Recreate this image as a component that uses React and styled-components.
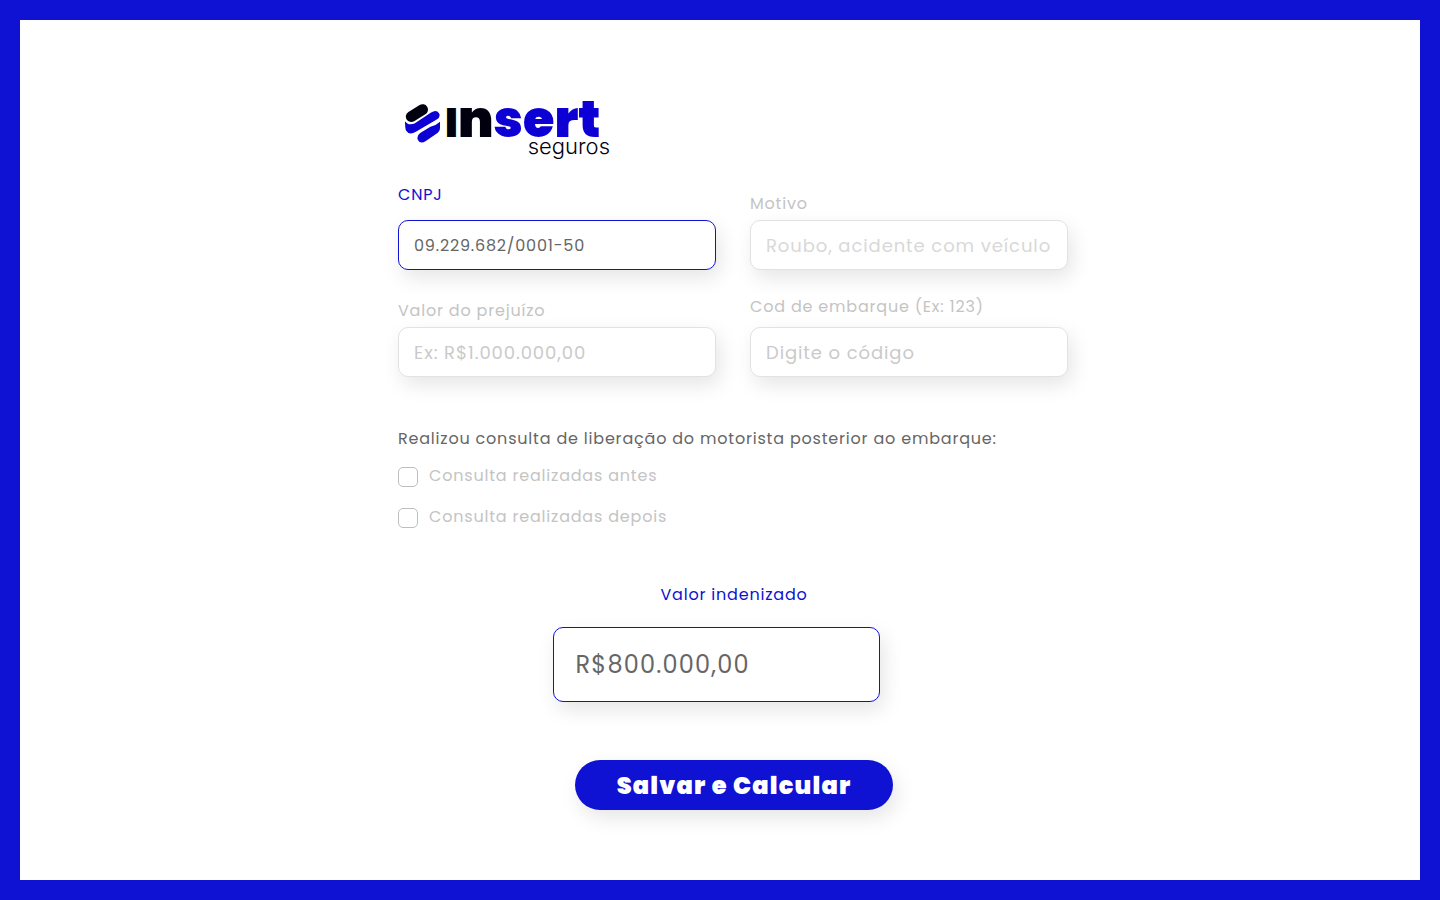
import React, { useState } from "react";
import styled, { createGlobalStyle } from "styled-components";

const blue = "#0f12d2";
const ink = "#666666";
const muted = "#c4c4c4";
const shadow = "4px 8px 20px rgba(0, 0, 0, 0.1)";

const GlobalStyle = createGlobalStyle`
  *, *::before, *::after { box-sizing: border-box; }
  body {
    margin: 0;
    background: #fff;
    color: ${ink};
    font-family: Poppins, Inter, sans-serif;
    font-size: 16px;
    line-height: 24px;
  }
  label, legend, input, button { letter-spacing: 0.05em; }
`;

const Page = styled.main`
  display: flex;
  justify-content: center;
  min-height: 100vh;
  padding: 84px 0 48px 28px;
  border: 20px solid ${blue};
`;

const Form = styled.form`
  width: 100%;
  max-width: 672px;
`;

const Brand = styled.header`
  display: flex;
  align-items: flex-start;
  gap: 5px;
  height: 79px;
  padding-left: 7px;
`;

const Wordmark = styled.div`
  display: flex;
  flex-direction: column;
  width: 165px;
`;

const BrandName = styled.div`
  color: #0d00d4;
  font-size: 51px;
  font-weight: 900;
  line-height: 30px;
  white-space: nowrap;
`;

const BrandDark = styled.span`
  color: #00000f;
`;

const BrandInitial = styled.span`
  font-size: 40px;
  line-height: 0;
`;

const BrandSub = styled.div`
  color: #00000f;
  font-family: Inter, sans-serif;
  font-size: 22px;
  font-weight: 300;
  text-align: right;
`;

const Fields = styled.div`
  display: grid;
  grid-template-columns: repeat(2, minmax(0, 318px));
  align-items: end;
  gap: 25px 34px;
`;

const Field = styled.div`
  display: flex;
  flex-direction: column;
  gap: ${(p) => p.$gap}px;
`;

const Label = styled.label`
  color: ${(p) => (p.$active ? blue : muted)};
`;

const Input = styled.input`
  width: 100%;
  height: ${(p) => (p.$large ? 75 : 50)}px;
  padding: 0 ${(p) => (p.$large ? 22 : 15)}px;
  border: 1px solid ${(p) => (p.$active ? blue : "#e2e2e2")};
  border-radius: 10px;
  outline: none;
  background: #fff;
  box-shadow: ${shadow};
  color: ${ink};
  font-family: inherit;
  font-size: ${(p) => p.$size}px;

  &::placeholder {
    color: ${(p) => (p.$faint ? "#d8d8d8" : "#cacaca")};
    opacity: 1;
  }
`;

const Choices = styled.fieldset`
  display: flex;
  flex-direction: column;
  gap: 17px;
  margin: 50px 0 0;
  padding: 0;
  border: 0;
`;

const Question = styled.legend`
  margin-bottom: 13px;
  padding: 0;
`;

const Choice = styled.label`
  display: flex;
  align-items: center;
  gap: 11px;
  color: ${muted};
`;

const Checkbox = styled.input`
  appearance: none;
  width: 20px;
  height: 20px;
  margin: 2px 0 0;
  border: 1px solid #bdbdbd;
  border-radius: 5px;
  background: #fff;

  &:checked { background: ${blue}; }
`;

const Result = styled.section`
  display: flex;
  flex-direction: column;
  align-items: center;
  margin-top: 54px;
`;

const ResultField = styled.div`
  width: 100%;
  max-width: 363px;
  margin: 20px 0 58px;
  padding-right: 36px;
`;

const Submit = styled.button`
  width: 100%;
  max-width: 318px;
  height: 50px;
  border: 0;
  border-radius: 25px;
  background: ${blue};
  box-shadow: ${shadow};
  color: #fff;
  font-family: inherit;
  font-size: 24px;
  font-weight: 900;
  cursor: pointer;
`;

function Logo() {
  return (
    <Brand>
      <svg width="35" height="39" viewBox="9 10 106 118" aria-hidden="true">
        <path d="M28 48 L62 27" stroke="#00000f" strokeWidth="33" strokeLinecap="round" />
        <path
          fill="#0d00d4"
          d="M9 62 Q18 76 38 69 L88 36 Q104 26 112 38 Q118 49 105 57 L42 94 Q22 106 12 90 Q9 82 9 62 Z"
        />
        <path
          fill="#0d00d4"
          d="M115 64 V82 Q115 94 103 101 L72 122 Q56 133 48 119 Q43 107 55 98 L86 79 Q104 75 115 64 Z"
        />
      </svg>
      <Wordmark>
        <BrandName>
          <BrandDark>
            <BrandInitial>I</BrandInitial>n
          </BrandDark>
          sert
        </BrandName>
        <BrandSub>seguros</BrandSub>
      </Wordmark>
    </Brand>
  );
}

const fields = [
  { id: "cnpj", label: "CNPJ", gap: 13, size: 16, active: true, value: "09.229.682/0001-50" },
  { id: "motivo", label: "Motivo", gap: 4, size: 18, faint: true, placeholder: "Roubo, acidente com veículo" },
  { id: "prejuizo", label: "Valor do prejuízo", gap: 4, size: 18, placeholder: "Ex: R$1.000.000,00" },
  { id: "embarque", label: "Cod de embarque (Ex: 123)", gap: 8, size: 18, placeholder: "Digite o código" },
];

export default function App() {
  const [total, setTotal] = useState("R$800.000,00");

  return (
    <>
      <GlobalStyle />
      <Page>
        <Form onSubmit={(e) => e.preventDefault()}>
          <Logo />
          <Fields>
            {fields.map((f) => (
              <Field key={f.id} $gap={f.gap}>
                <Label htmlFor={f.id} $active={f.active}>{f.label}</Label>
                <Input
                  id={f.id}
                  type="text"
                  $active={f.active}
                  $faint={f.faint}
                  $size={f.size}
                  defaultValue={f.value}
                  placeholder={f.placeholder}
                />
              </Field>
            ))}
          </Fields>
          <Choices>
            <Question>Realizou consulta de liberação do motorista posterior ao embarque:</Question>
            <Choice>
              <Checkbox type="checkbox" name="antes" />
              Consulta realizadas antes
            </Choice>
            <Choice>
              <Checkbox type="checkbox" name="depois" />
              Consulta realizadas depois
            </Choice>
          </Choices>
          <Result>
            <Label htmlFor="indenizado" $active>Valor indenizado</Label>
            <ResultField>
              <Input
                id="indenizado"
                type="text"
                $active
                $large
                $size={24}
                value={total}
                onChange={(e) => setTotal(e.target.value)}
              />
            </ResultField>
            <Submit type="submit">Salvar e Calcular</Submit>
          </Result>
        </Form>
      </Page>
    </>
  );
}
